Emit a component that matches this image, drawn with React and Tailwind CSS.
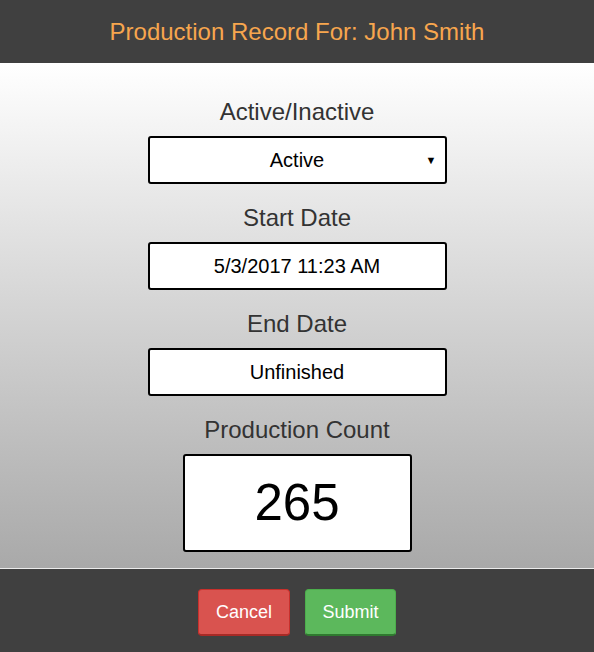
const Field = ({ label, children }) => (
  <div className="flex flex-col items-center mb-[21px]">
    <div className="text-[24px] leading-[26px] text-[#333] mb-[11px]">{label}</div>
    {children}
  </div>
);

const App = () => {
  return (
    <div className="w-[594px] h-[652px] flex flex-col font-['Liberation_Sans',Arial,sans-serif]">
      <div className="h-[63px] bg-[#404040] flex items-center justify-center">
        <h1 className="text-[24px] text-[#f7a64e] leading-none">Production Record For: John Smith</h1>
      </div>

      <div className="h-[505px] bg-gradient-to-b from-white to-[#a9a9a9] pt-[36px] flex flex-col">
        <Field label="Active/Inactive">
          <div className="relative w-[299px] h-[48px] bg-white border-2 border-black rounded-[3px] flex items-center justify-center text-[20px] text-black">
            Active
            <span className="absolute right-[8px] top-[14px] text-[11px]">▼</span>
          </div>
        </Field>
        <Field label="Start Date">
          <div className="w-[299px] h-[48px] bg-white border-2 border-black rounded-[3px] flex items-center justify-center text-[20px] text-black">
            5/3/2017 11:23 AM
          </div>
        </Field>
        <Field label="End Date">
          <div className="w-[299px] h-[48px] bg-white border-2 border-black rounded-[3px] flex items-center justify-center text-[20px] text-black">
            Unfinished
          </div>
        </Field>
        <div className="flex flex-col items-center">
          <div className="text-[24px] leading-[26px] text-[#333] mb-[11px]">Production Count</div>
          <div className="w-[229px] h-[98px] bg-white border-2 border-black rounded-[3px] flex items-center justify-center text-[51px] text-black">
            265
          </div>
        </div>
      </div>

      <div className="h-px bg-[#ececec]" />

      <div className="flex-1 bg-[#404040] flex items-start justify-center gap-[15px] pt-[20px]">
        <button className="w-[92px] h-[47px] bg-[#d9534f] border border-[#c9302c] border-b-2 border-b-[#a82a26] rounded-[4px] text-white text-[18px]">
          Cancel
        </button>
        <button className="w-[91px] h-[47px] bg-[#5cb85c] border border-[#4cae4c] border-b-2 border-b-[#2f7a2f] rounded-[4px] text-white text-[18px]">
          Submit
        </button>
      </div>
    </div>
  );
};

export default App;
